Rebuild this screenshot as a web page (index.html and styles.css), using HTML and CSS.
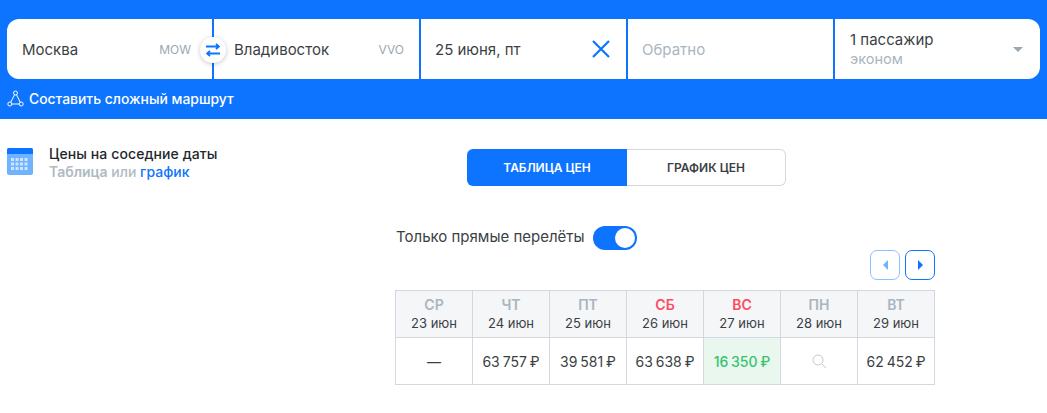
FILE: index.html
```html
<!DOCTYPE html>
<html lang="ru">
<head>
    <meta charset="UTF-8">
    <title>Цены на соседние даты</title>
    <link rel="stylesheet" href="styles.css">
</head>
<body>
<header class="header">
    <div class="search">
        <div class="field field-from">
            <span class="field-value">Москва</span>
            <span class="field-code">MOW</span>
            <button class="swap" type="button" aria-label="Поменять">
                <svg width="14" height="14" viewBox="0 0 14 14" fill="none" stroke="#0d74ff" stroke-width="1.8">
                    <path d="M0 3.5H13M10 0.8L13 3.5L10 6.2"/>
                    <path d="M14 10.5H1M4 7.8L1 10.5L4 13.2"/>
                </svg>
            </button>
        </div>
        <div class="field field-to">
            <span class="field-value">Владивосток</span>
            <span class="field-code">VVO</span>
        </div>
        <div class="field field-date">
            <span class="field-value">25 июня, пт</span>
            <svg class="clear" width="18" height="18" viewBox="0 0 18 18" fill="none" stroke="#0d74ff" stroke-width="2.2">
                <path d="M1 1L17 17M17 1L1 17"/>
            </svg>
        </div>
        <div class="field field-date">
            <span class="field-placeholder">Обратно</span>
        </div>
        <div class="field">
            <div class="pass-text">
                <span class="field-value">1 пассажир</span>
                <span class="pass-class">эконом</span>
            </div>
            <span class="caret"></span>
        </div>
    </div>
    <a class="route-link" href="#">
        <svg width="17" height="17" viewBox="0 0 17 17" fill="none" stroke="#fff" stroke-width="1">
            <circle cx="8.5" cy="3" r="2"/>
            <circle cx="2.8" cy="14" r="2"/>
            <circle cx="14.2" cy="14" r="2"/>
            <path d="M7.5 4.8L3.8 12.2M9.5 4.8L13.2 12.2M4.8 14H12.2"/>
        </svg>
        Составить сложный маршрут
    </a>
</header>

<div class="content">
    <aside class="aside">
        <svg class="calendar" width="26" height="28" viewBox="0 0 26 28">
            <rect y="0" width="26" height="27" rx="2" fill="#70b3ff"/>
            <path d="M0 6V2a2 2 0 0 1 2-2h22a2 2 0 0 1 2 2v4z" fill="#0d74ff"/>
            <g fill="#cfe4ff">
                <rect x="4" y="10" width="3" height="3"/><rect x="8.5" y="10" width="3" height="3"/><rect x="13" y="10" width="3" height="3"/><rect x="17.5" y="10" width="3" height="3"/>
                <rect x="4" y="14.5" width="3" height="3"/><rect x="8.5" y="14.5" width="3" height="3"/><rect x="13" y="14.5" width="3" height="3"/><rect x="17.5" y="14.5" width="3" height="3"/>
                <rect x="4" y="19" width="3" height="3"/><rect x="8.5" y="19" width="3" height="3"/><rect x="13" y="19" width="3" height="3"/><rect x="17.5" y="19" width="3" height="3"/>
            </g>
        </svg>
        <div class="aside-text">
            <div class="aside-title">Цены на соседние даты</div>
            <div class="aside-sub"><b>Таблица</b> или <a href="#">график</a></div>
        </div>
    </aside>

    <main class="main">
        <div class="tabs">
            <div class="tab tab-active">ТАБЛИЦА ЦЕН</div>
            <div class="tab">ГРАФИК ЦЕН</div>
        </div>

        <div class="direct">
            <span class="direct-label">Только прямые перелёты</span>
            <span class="toggle"><span class="toggle-knob"></span></span>
        </div>

        <div class="pager">
            <button class="pager-btn pager-off" type="button"><span class="arrow-left"></span></button>
            <button class="pager-btn" type="button"><span class="arrow-right"></span></button>
        </div>

        <table class="prices">
            <tr>
                <th><b>СР</b>23 июн</th>
                <th><b>ЧТ</b>24 июн</th>
                <th><b>ПТ</b>25 июн</th>
                <th><b class="weekend">СБ</b>26 июн</th>
                <th><b class="weekend">ВС</b>27 июн</th>
                <th><b>ПН</b>28 июн</th>
                <th><b>ВТ</b>29 июн</th>
            </tr>
            <tr>
                <td>—</td>
                <td>63 757 ₽</td>
                <td>39 581 ₽</td>
                <td>63 638 ₽</td>
                <td class="best">16 350 ₽</td>
                <td>
                    <svg class="lens" width="15" height="15" viewBox="0 0 15 15" fill="none" stroke="#c3c9d0" stroke-width="1">
                        <circle cx="6" cy="6" r="5"/>
                        <path d="M9.7 9.7L14 14"/>
                    </svg>
                </td>
                <td>62 452 ₽</td>
            </tr>
        </table>
    </main>
</div>
</body>
</html>
```

FILE: styles.css
```css
* {
    box-sizing: border-box;
}

body {
    font-family: Inter, "Noto Sans", sans-serif;
    background-color: #fff;
    color: #333;
    margin: 0;
    padding: 0;
}

.header {
    background-color: #0d74ff;
    height: 119px;
    padding: 19px 7px 0;
}

.search {
    display: flex;
    gap: 2px;
    height: 60px;
}

.field {
    position: relative;
    display: flex;
    align-items: center;
    justify-content: space-between;
    flex: 0 0 205px;
    background-color: #fff;
    padding: 0 15px;
    font-size: 15px;
}

.field:first-child {
    border-radius: 12px 0 0 12px;
}

.field:last-child {
    border-radius: 0 12px 12px 0;
}

.field-from {
    padding-right: 21px;
}

.field-to {
    padding-left: 20px;
}

.field-date {
    padding: 0 16px 0 14px;
}

.field-value {
    color: #3b3f44;
}

.field-code {
    font-size: 12px;
    color: #9aa8b2;
}

.field-placeholder {
    color: #a9b5c0;
}

.swap {
    position: absolute;
    top: 18px;
    right: -14px;
    z-index: 1;
    width: 26px;
    height: 26px;
    padding: 0;
    display: flex;
    align-items: center;
    justify-content: center;
    border: none;
    border-radius: 50%;
    background-color: #fff;
    box-shadow: 0 1px 5px rgba(0, 0, 0, 0.22);
}

.pass-text {
    display: flex;
    flex-direction: column;
    gap: 1px;
    margin-top: -1px;
}

.pass-class {
    font-size: 14.5px;
    color: #a9b5c0;
}

.caret {
    width: 0;
    height: 0;
    margin-right: 2px;
    border-left: 5px solid transparent;
    border-right: 5px solid transparent;
    border-top: 5px solid #9aa8b2;
}

.route-link {
    display: flex;
    align-items: center;
    gap: 5px;
    margin-top: 11px;
    font-size: 13.9px;
    font-weight: 500;
    color: #fff;
    text-decoration: none;
}

.content {
    display: flex;
    padding: 0 7px;
}

.aside {
    display: flex;
    gap: 16px;
    width: 388px;
    padding-top: 29px;
}

.calendar {
    flex: none;
}

.aside-text {
    font-size: 14px;
    line-height: 18px;
    margin-top: -3px;
}

.aside-title {
    font-weight: 500;
    letter-spacing: 0.1px;
    color: #23272b;
}

.aside-sub {
    color: #b0bac4;
    font-weight: 500;
}

.aside-sub b {
    font-weight: 600;
}

.aside-sub a {
    color: #0d74ff;
    text-decoration: none;
}

.main {
    width: 540px;
}

.tabs {
    display: flex;
    width: 319px;
    height: 37px;
    margin: 30px 0 0 72px;
}

.tab {
    flex: 0 0 159px;
    display: flex;
    align-items: center;
    justify-content: center;
    font-size: 12px;
    font-weight: 600;
    color: #3b3f44;
    border: 1px solid #d3d8e0;
    border-left: none;
    border-radius: 0 6px 6px 0;
}

.tab-active {
    flex-basis: 160px;
    color: #fff;
    background-color: #0d74ff;
    border: none;
    border-radius: 6px 0 0 6px;
}

.direct {
    display: flex;
    align-items: center;
    gap: 8px;
    margin-top: 40px;
    padding-left: 1px;
    font-size: 15px;
    color: #3b3f44;
}

.direct-label {
    margin-bottom: 3px;
}

.toggle {
    display: flex;
    justify-content: flex-end;
    width: 44px;
    height: 24px;
    padding: 2px;
    border-radius: 12px;
    background-color: #0d74ff;
}

.toggle-knob {
    width: 20px;
    height: 20px;
    border-radius: 50%;
    background-color: #fff;
}

.pager {
    display: flex;
    justify-content: flex-end;
    gap: 5px;
    height: 30px;
}

.pager-btn {
    display: flex;
    align-items: center;
    justify-content: center;
    width: 30px;
    height: 30px;
    padding: 0;
    background-color: #fff;
    border: 1px solid #0d74ff;
    border-radius: 7px;
}

.pager-off {
    border-color: #8fc0ff;
}

.arrow-left,
.arrow-right {
    width: 0;
    height: 0;
    border-top: 5px solid transparent;
    border-bottom: 5px solid transparent;
}

.arrow-left {
    border-right: 5px solid #70b3ff;
}

.arrow-right {
    border-left: 5px solid #0d74ff;
}

.prices {
    width: 540px;
    margin-top: 10px;
    table-layout: fixed;
    border-collapse: collapse;
}

.prices th,
.prices td {
    border: 1px solid #d3d8e0;
    text-align: center;
    padding: 0;
    font-size: 14px;
    word-spacing: -1px;
    height: 47px;
    color: #3b3f44;
}

.prices th {
    background-color: #f4f6f8;
    font-size: 13px;
    word-spacing: 0;
    font-weight: 400;
    line-height: 19px;
}

.prices th b {
    display: block;
    font-size: 14px;
    font-weight: 600;
    color: #a9b5c0;
}

.prices th b.weekend {
    color: #ff4b5f;
}

.prices .best {
    background-color: #e9f7ee;
    color: #35c46e;
    font-weight: 500;
}

.lens {
    display: block;
    margin: 0 auto;
}
```
